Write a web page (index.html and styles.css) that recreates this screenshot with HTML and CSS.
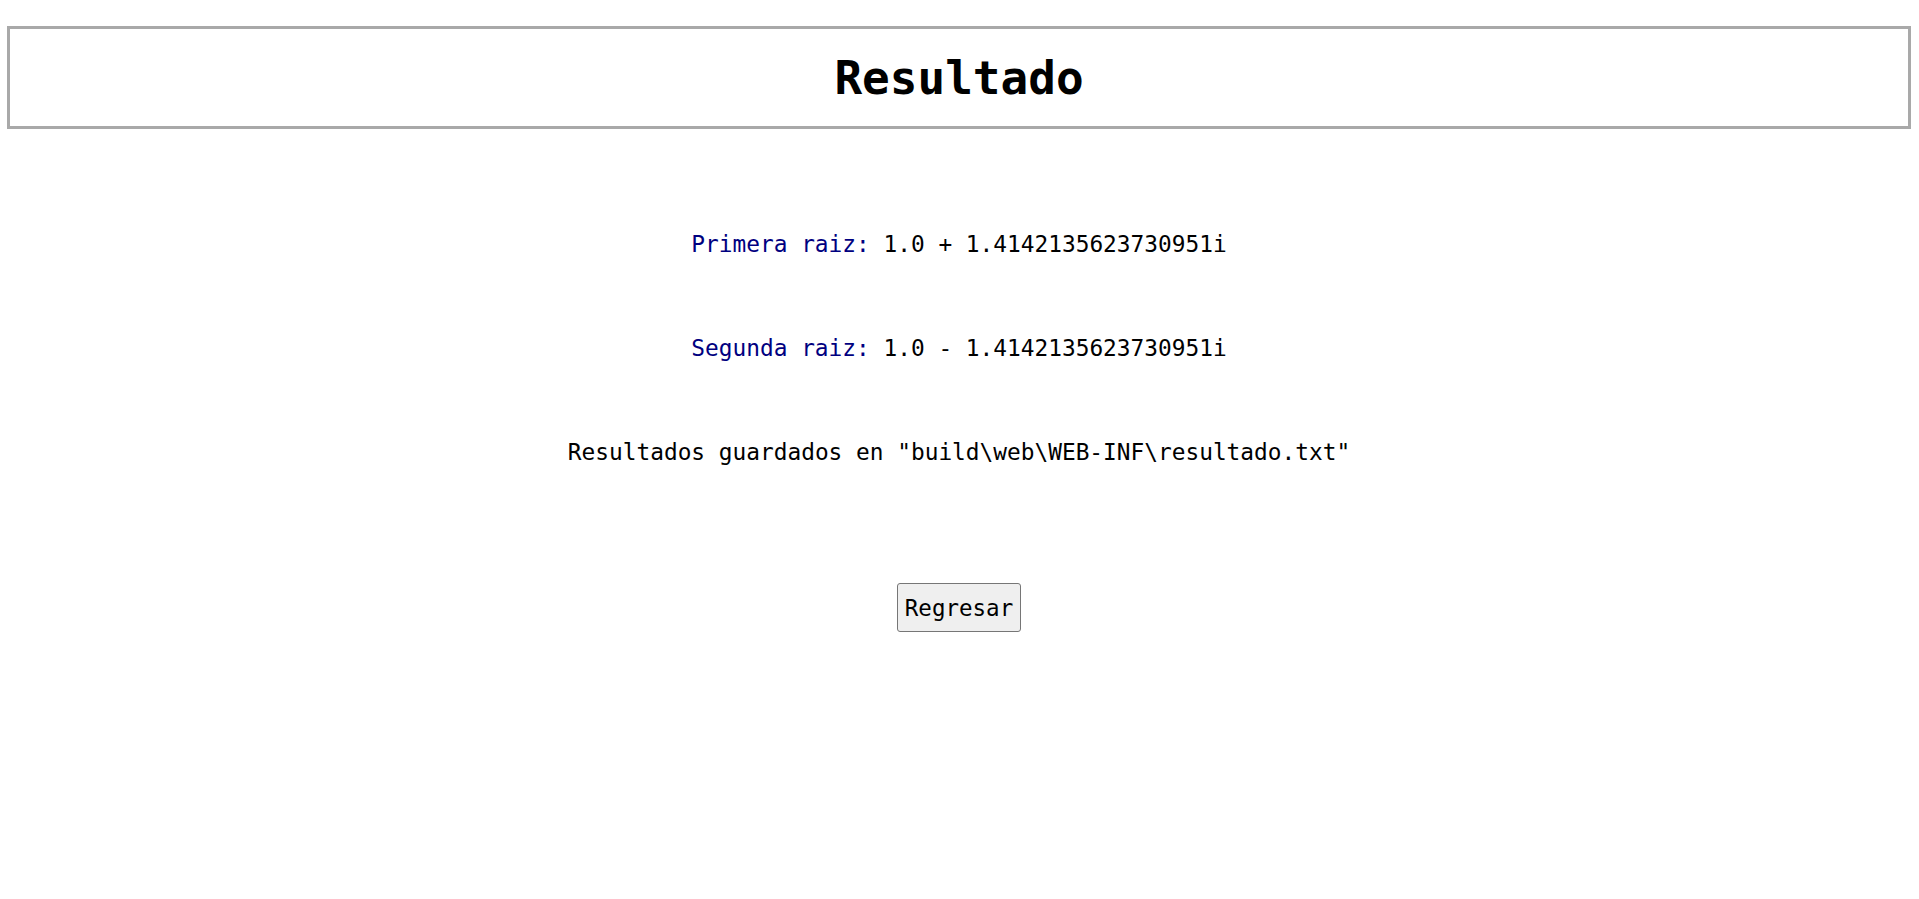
FILE: index.html
```html
<!DOCTYPE html>
<html lang="es">
<head>
<meta charset="utf-8">
<title>Resultado</title>
<link rel="stylesheet" href="styles.css">
</head>
<body>
<header class="title-box">
  <h1 class="title">Resultado</h1>
</header>
<main class="results">
  <p class="line"><span class="label">Primera raiz:</span> 1.0 + 1.4142135623730951i</p>
  <p class="line"><span class="label">Segunda raiz:</span> 1.0 - 1.4142135623730951i</p>
  <p class="line">Resultados guardados en "build\web\WEB-INF\resultado.txt"</p>
  <form class="actions">
    <button type="button" class="back-btn">Regresar</button>
  </form>
</main>
</body>
</html>
```

FILE: styles.css
```css
html, body {
  background: #ffffff;
}
body {
  margin: 26px 8px 0 7px;
  font-family: "DejaVu Sans Mono", "Liberation Mono", monospace;
  color: #000000;
}
.title-box {
  border: 3px solid #a9a9a9;
  height: 97px;
  display: flex;
  align-items: center;
  justify-content: center;
}
.title {
  margin: 0;
  font-size: 46px;
  font-weight: bold;
  line-height: normal;
}
.results {
  display: flex;
  flex-direction: column;
  align-items: center;
  padding-top: 102px;
  gap: 77px;
}
.line {
  margin: 0;
  font-size: 22.8px;
  line-height: 27px;
  white-space: pre;
}
.label {
  color: #000080;
}
.actions {
  margin: 40px 0 0 0;
  display: flex;
  justify-content: center;
}
.back-btn {
  font-family: "DejaVu Sans Mono", "Liberation Mono", monospace;
  font-size: 22.5px;
  height: 49px;
  padding: 0 7px;
  background: #efefef;
  color: #000000;
  border: 1px solid #767676;
  border-radius: 3px;
}
```
